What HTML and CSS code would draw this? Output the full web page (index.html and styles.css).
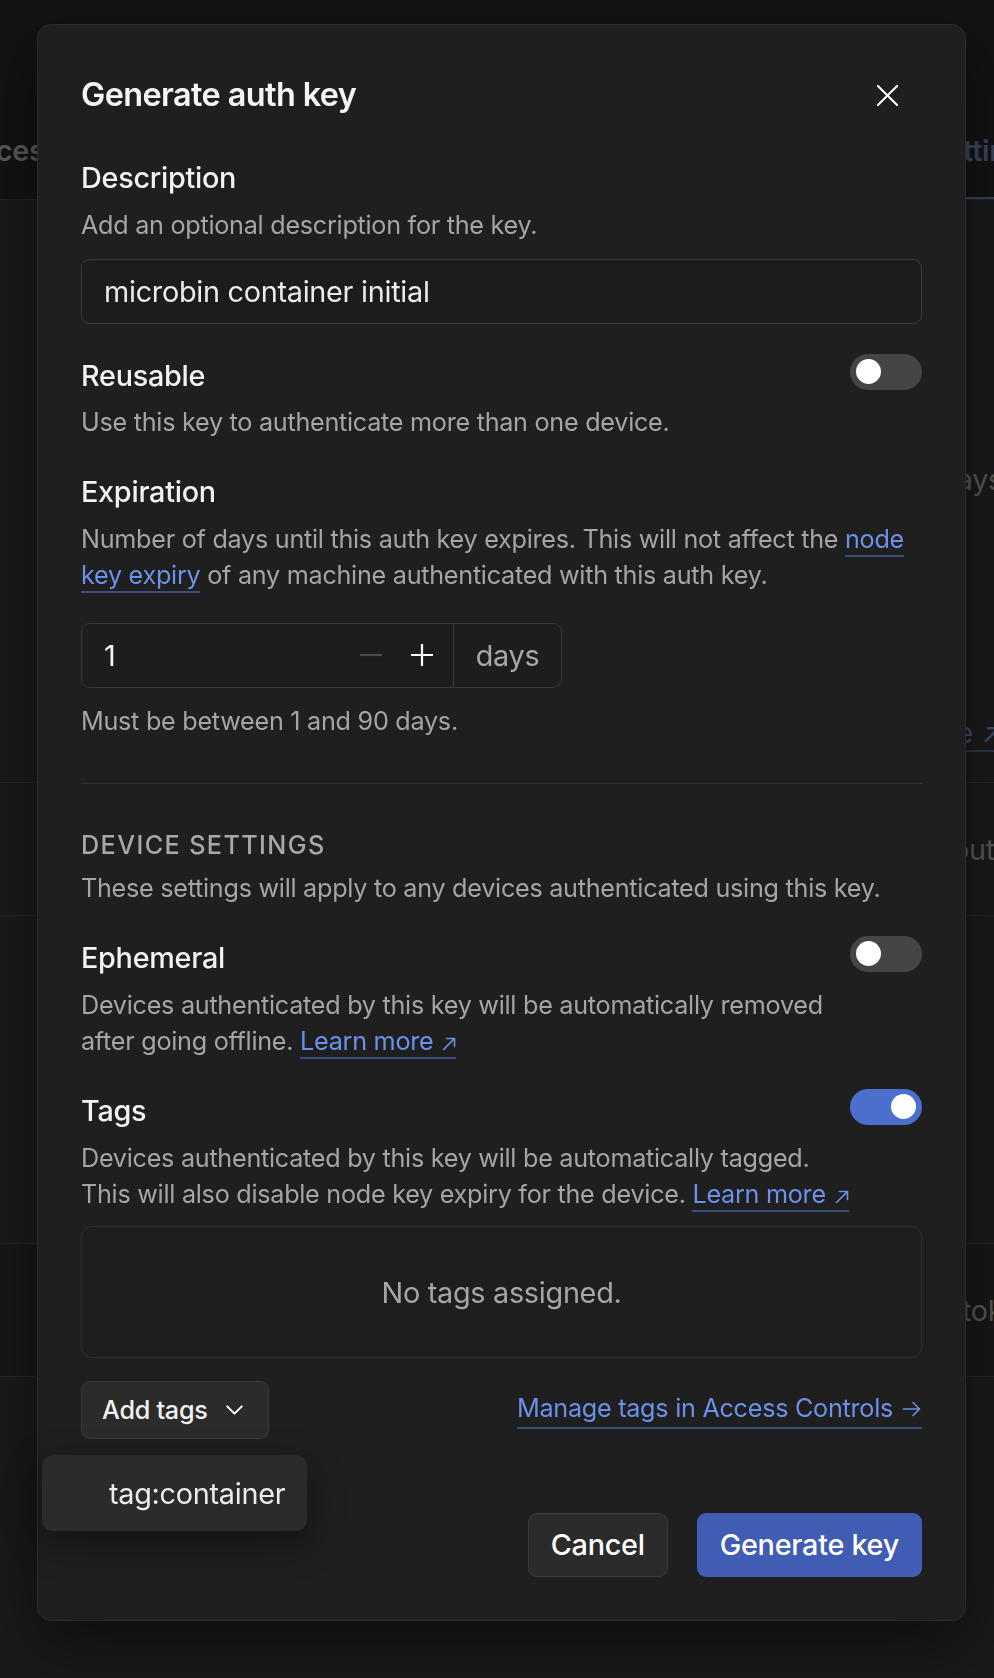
FILE: index.html
```html
<!DOCTYPE html>
<html lang="en">
<head>
  <meta charset="UTF-8">
  <meta name="viewport" content="width=device-width, initial-scale=1.0">
  <title>Generate auth key</title>
  <link rel="stylesheet" href="styles.css">
</head>
<body>
  <!-- page behind the dialog (dimmed) -->
  <div class="page">
    <header class="page-header">
      <nav class="page-tabs">
        <span class="page-tab">Services</span>
        <span class="page-tab">Users</span>
        <span class="page-tab">Access controls</span>
        <span class="page-tab">Logs</span>
        <span class="page-tab">DNS</span>
        <span class="page-tab active">Settings</span>
      </nav>
    </header>
    <main class="page-body">
      <section class="page-row row-expiry">
        <span class="page-text">Key expiry 90 days</span>
        <span class="page-link">Learn more ↗</span>
      </section>
      <section class="page-row row-logout">
        <span class="page-text">Log out</span>
      </section>
      <section class="page-row row-empty"></section>
      <section class="page-row row-tokens">
        <span class="page-text">tokens</span>
      </section>
    </main>
  </div>

  <!-- dialog -->
  <div class="overlay">
    <div class="dialog">
      <div class="dialog-header">
        <h2 class="dialog-title">Generate auth key</h2>
        <button class="close-btn" aria-label="Close">
          <svg width="27" height="27" viewBox="0 0 24 24" fill="none" stroke="#fff" stroke-width="1.8" stroke-linecap="round">
            <path d="M3.5 3.5l17 17M20.5 3.5l-17 17"/>
          </svg>
        </button>
      </div>

      <div class="field">
        <div class="field-label">Description</div>
        <p class="help">Add an optional description for the key.</p>
        <input class="text-input" type="text" value="microbin container initial">
      </div>

      <div class="field section">
        <div class="toggle-row">
          <div class="field-label">Reusable</div>
          <span class="toggle"><span class="knob"></span></span>
        </div>
        <p class="help">Use this key to authenticate more than one device.</p>
      </div>

      <div class="field section">
        <div class="field-label">Expiration</div>
        <p class="help">Number of days until this auth key expires. This will not affect the <a class="link" href="#">node key expiry</a> of any machine authenticated with this auth key.</p>
        <div class="stepper">
          <div class="stepper-input">
            <span class="stepper-value">1</span>
            <span class="step-btn">
              <svg width="22" height="22" viewBox="0 0 22 22" fill="none" stroke="#4d4d4d" stroke-width="2.2"><path d="M0 11h22"/></svg>
            </span>
            <span class="step-btn">
              <svg width="22" height="22" viewBox="0 0 22 22" fill="none" stroke="#fff" stroke-width="2.2"><path d="M0 11h22M11 0v22"/></svg>
            </span>
          </div>
          <div class="stepper-addon">days</div>
        </div>
        <p class="help hint">Must be between 1 and 90 days.</p>
      </div>

      <hr class="divider">

      <div class="field">
        <div class="group-title">DEVICE SETTINGS</div>
        <p class="help">These settings will apply to any devices authenticated using this key.</p>
      </div>

      <div class="field section-tight">
        <div class="toggle-row">
          <div class="field-label">Ephemeral</div>
          <span class="toggle"><span class="knob"></span></span>
        </div>
        <p class="help narrow">Devices authenticated by this key will be automatically removed after going offline. <a class="link" href="#">Learn more<svg class="ext" width="14" height="14" viewBox="0 0 14 14" fill="none" stroke="currentColor" stroke-width="1.6" stroke-linecap="round" stroke-linejoin="round"><path d="M1.5 12.5L12.5 1.5M4.5 1.5h8v8"/></svg></a></p>
      </div>

      <div class="field section-tight">
        <div class="toggle-row">
          <div class="field-label">Tags</div>
          <span class="toggle on"><span class="knob"></span></span>
        </div>
        <p class="help narrow">Devices authenticated by this key will be automatically tagged.<br>This will also disable node key expiry for the device. <a class="link nowrap" href="#">Learn more<svg class="ext" width="14" height="14" viewBox="0 0 14 14" fill="none" stroke="currentColor" stroke-width="1.6" stroke-linecap="round" stroke-linejoin="round"><path d="M1.5 12.5L12.5 1.5M4.5 1.5h8v8"/></svg></a></p>
        <div class="tags-box">No tags assigned.</div>
      </div>

      <div class="tags-actions">
        <div class="tags-menu">
          <button class="add-tags-btn">Add tags
            <svg width="25" height="25" viewBox="0 0 24 24" fill="none" stroke="#fff" stroke-width="1.9" stroke-linecap="round" stroke-linejoin="round"><path d="M5 9l7 7 7-7"/></svg>
          </button>
          <div class="dropdown">
            <div class="dropdown-item">tag:container</div>
          </div>
        </div>
        <a class="link manage-link" href="#">Manage tags in Access Controls<svg class="arrow" width="20" height="20" viewBox="0 0 20 20" fill="none" stroke="currentColor" stroke-width="1.6" stroke-linecap="round" stroke-linejoin="round"><path d="M1.5 10h16M11 3.5l6.5 6.5-6.5 6.5"/></svg></a>
      </div>

      <div class="dialog-footer">
        <button class="btn btn-secondary">Cancel</button>
        <button class="btn btn-primary">Generate key</button>
      </div>
    </div>
  </div>
</body>
</html>
```

FILE: styles.css
```css
body, html {
  margin: 0;
  padding: 0;
}

body {
  width: 994px;
  height: 1678px;
  overflow: hidden;
  background-color: #1a1a1a;
  font-family: "Inter", "Noto Sans", sans-serif;
  letter-spacing: -0.017em;
  color: #f0f0f0;
}

/* ---- page behind the dialog ---- */
.page {
  width: 1003px;
}

.page-header {
  height: 200px;
  box-sizing: border-box;
  background-color: #131313;
  border-bottom: 1px solid #232323;
  display: flex;
  align-items: flex-end;
}

.page-tabs {
  display: flex;
  flex-shrink: 0;
  gap: 60px;
  margin-left: -75px;
  width: 1200px;
}

.page-tab {
  white-space: nowrap;
  font-size: 28.8px;
  line-height: 43px;
  font-weight: 600;
  color: #585858;
  padding-bottom: 27px;
}

.page-tab.active {
  margin-left: auto;
  margin-right: 85px;
  color: #3a4560;
  border-bottom: 2px solid #36425f;
  padding-bottom: 25px;
}

.page-body {
  display: flex;
  flex-direction: column;
}

.page-row {
  border-bottom: 1px solid #262626;
  display: flex;
  flex-direction: column;
  align-items: flex-end;
  font-size: 28.8px;
  color: #555555;
  white-space: nowrap;
}

.row-expiry {
  height: 583px;
  box-sizing: border-box;
  padding-top: 262px;
  gap: 218px;
}

.page-link {
  color: #3b4969;
  border-bottom: 2px solid #2c3550;
}

.row-logout {
  height: 133px;
  box-sizing: border-box;
  justify-content: center;
  padding-right: 8px;
}

.row-empty {
  height: 327px;
}

.row-tokens {
  height: 133px;
  box-sizing: border-box;
  background-color: #171717;
  justify-content: center;
  align-items: flex-start;
  padding-left: 962px;
}

/* ---- dialog ---- */
.overlay {
  position: fixed;
  top: 0;
  left: 0;
  right: 0;
  bottom: 0;
}

.dialog {
  margin: 24px 0 0 37px;
  width: 929px;
  box-sizing: border-box;
  background-color: #1f1f1f;
  border: 1px solid #2c2c2c;
  border-radius: 14px;
  padding: 45px 43px 43px;
  box-shadow: 0 24px 60px rgba(0, 0, 0, 0.45);
}

.dialog-header {
  display: flex;
  align-items: center;
  justify-content: space-between;
  margin-bottom: 36px;
}

.dialog-title {
  margin: 0;
  font-size: 32.4px;
  line-height: 50.4px;
  font-weight: 600;
  letter-spacing: -0.018em;
  color: #f5f5f5;
}

.close-btn {
  width: 44px;
  height: 44px;
  margin-right: 13px;
  padding: 0;
  border: none;
  background: none;
  display: flex;
  align-items: center;
  justify-content: center;
}

.section {
  margin-top: 30px;
}

.section-tight {
  margin-top: 29.5px;
}

.field-label {
  font-size: 28.8px;
  line-height: 43.2px;
  font-weight: 500;
  color: #f2f2f2;
}

.help {
  margin: 7.4px 0 0;
  font-size: 25.2px;
  line-height: 36px;
  color: #a5a5a5;
}

.help.narrow {
  max-width: 790px;
  margin-top: 8px;
}

.help.hint {
  margin-top: 15.5px;
}

.link {
  color: #6d90ea;
  text-decoration: none;
  border-bottom: 2px solid #3a4c80;
  padding-bottom: 1px;
}

.link.nowrap {
  white-space: nowrap;
}

.link .ext {
  margin-left: 9px;
  vertical-align: -1px;
}

.text-input {
  display: block;
  width: 100%;
  height: 64.6px;
  margin-top: 16px;
  box-sizing: border-box;
  padding: 0 22px;
  font-family: inherit;
  font-size: 28.8px;
  letter-spacing: inherit;
  color: #ececec;
  background-color: #1c1c1c;
  border: 1px solid #3b3b3b;
  border-radius: 9px;
  outline: none;
}

/* toggles */
.toggle-row {
  display: flex;
  justify-content: space-between;
  align-items: flex-start;
}

.toggle {
  width: 72px;
  height: 36px;
  box-sizing: border-box;
  border-radius: 18px;
  background-color: #464544;
  padding: 0 6px;
  display: flex;
  align-items: center;
}

.toggle .knob {
  width: 25px;
  height: 25px;
  border-radius: 50%;
  background-color: #ffffff;
}

.toggle.on {
  background-color: #4a6fcc;
  justify-content: flex-end;
}

/* expiration stepper */
.stepper {
  display: flex;
  width: 481px;
  height: 64.8px;
  margin-top: 30px;
  box-sizing: border-box;
  border: 1px solid #383838;
  border-radius: 9px;
  background-color: #1d1d1d;
}

.stepper-input {
  flex: 1;
  display: flex;
  align-items: center;
  padding-left: 22px;
  padding-right: 9px;
  gap: 7px;
}

.stepper-value {
  flex: 1;
  font-size: 28.8px;
  color: #f5f5f5;
}

.step-btn {
  width: 44px;
  height: 44px;
  display: flex;
  align-items: center;
  justify-content: center;
}

.stepper-addon {
  width: 108px;
  flex-shrink: 0;
  box-sizing: border-box;
  border-left: 1px solid #383838;
  display: flex;
  align-items: center;
  justify-content: center;
  font-size: 28.8px;
  color: #a8a8a8;
}

.divider {
  margin: 43.5px 0;
  border: none;
  border-top: 1px solid #303030;
}

.group-title {
  font-size: 25.2px;
  line-height: 36px;
  font-weight: 500;
  letter-spacing: 0.055em;
  color: #a8a8a8;
}

/* tags */
.tags-box {
  margin-top: 14.5px;
  height: 132px;
  box-sizing: border-box;
  border: 1px solid #2f2f2f;
  border-radius: 11px;
  background-color: #1e1e1e;
  display: flex;
  align-items: center;
  justify-content: center;
  font-size: 28.8px;
  color: #a6a6a6;
}

.tags-actions {
  margin-top: 22.7px;
  display: flex;
  align-items: center;
  justify-content: space-between;
}

.tags-menu {
  position: relative;
}

.add-tags-btn {
  height: 57.6px;
  padding: 0 21px 0 20px;
  display: flex;
  align-items: center;
  gap: 14px;
  font-family: inherit;
  font-size: 25.2px;
  font-weight: 500;
  letter-spacing: inherit;
  color: #f2f2f2;
  background-color: #2b2b2b;
  border: 1px solid #3b3b3b;
  border-radius: 9px;
}

.dropdown {
  position: absolute;
  top: 74px;
  left: -39px;
  width: 265px;
  height: 76.4px;
  box-sizing: border-box;
  background-color: #2b2b2b;
  border-radius: 11px;
  box-shadow: 0 12px 36px rgba(0, 0, 0, 0.4);
  display: flex;
  align-items: center;
  padding-left: 67px;
  z-index: 2;
}

.dropdown-item {
  font-size: 28.8px;
  color: #ececec;
}

.manage-link {
  font-size: 25.2px;
  line-height: 36px;
}

.manage-link .arrow {
  margin-left: 9px;
  vertical-align: -2px;
}

/* footer buttons */
.dialog-footer {
  margin-top: 74px;
  display: flex;
  justify-content: flex-end;
  gap: 29px;
}

.btn {
  height: 64.4px;
  font-family: inherit;
  font-size: 28.8px;
  font-weight: 500;
  letter-spacing: inherit;
  border-radius: 9px;
  color: #ffffff;
}

.btn-secondary {
  padding: 0 22px;
  background-color: #2b2b2b;
  border: 1px solid #3c3c3c;
}

.btn-primary {
  padding: 0 23px;
  background-color: #405db3;
  border: none;
}
```
